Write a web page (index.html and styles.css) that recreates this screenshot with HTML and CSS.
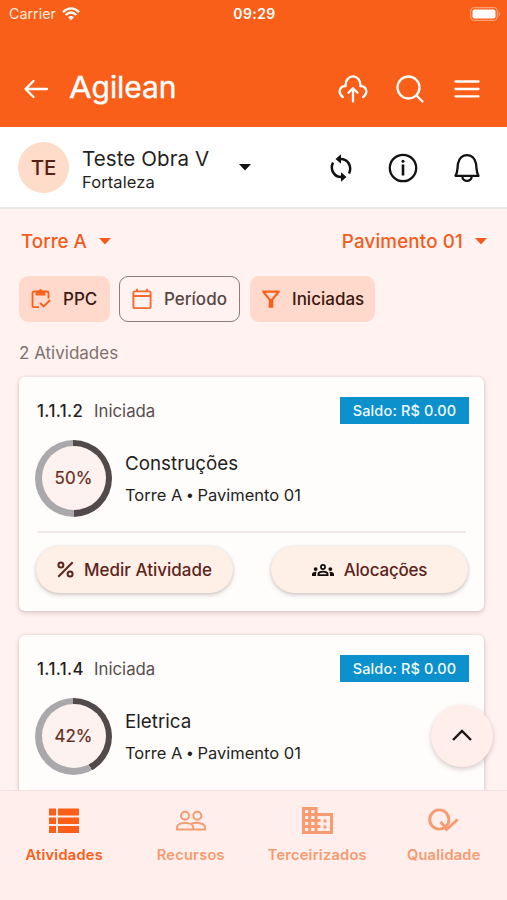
FILE: index.html
```html
<!DOCTYPE html>
<html lang="pt-BR">
<head>
<meta charset="utf-8">
<title>Agilean</title>
<link rel="stylesheet" href="styles.css">
</head>
<body>
<div class="app">
  <header class="top">
    <div class="status">
      <div class="carrier"><span>Carrier</span>
        <svg width="18" height="14" viewBox="0 0 18 14" fill="none" stroke="#fff" stroke-width="2.3"><path d="M.9 5.1Q9-2.4 17.100 5.100M3.700 8Q9 3.100 14.300 8"/><path d="M6 10.200Q9 7.600 12 10.200L9 13.300Z" fill="#fff" stroke="none"/></svg>
      </div>
      <span class="clock">09:29</span>
      <svg class="battery" width="31" height="14" viewBox="0 0 31 14"><rect x=".7" y=".7" width="26.600" height="12.600" rx="3.600" fill="none" stroke="#fff" stroke-opacity=".4" stroke-width="1.200"/><rect x="2.500" y="2.500" width="23" height="9" rx="2" fill="#fff"/><path d="M28.700 4.500q3 2.500 0 5z" fill="#fff" fill-opacity=".4"/></svg>
    </div>
    <div class="bar">
      <svg width="26" height="22" viewBox="0 0 26 22" fill="none" stroke="#fff" stroke-width="2.300" stroke-linecap="round" stroke-linejoin="round"><path d="M24 11H2.500M10.500 3L2.500 11l8 8"/></svg>
      <span class="logo"><span class="logo-a">A</span>gilean</span>
      <div class="actions">
        <svg width="30" height="28" viewBox="0 0 30 28" fill="none" stroke="#fff" stroke-width="2.300" stroke-linecap="round" stroke-linejoin="round"><path d="M4.800 22C-.5 18 1.500 10.800 7.600 11.200C6.500-1.800 23.500-1.800 22.400 11.200C28.500 10.800 30.500 18 25.200 22"/><path d="M15 26.500V13.500M10.500 17.800L15 13.300l4.500 4.500"/></svg>
        <svg width="28" height="28" viewBox="0 0 28 28" fill="none" stroke="#fff" stroke-width="2.300" stroke-linecap="round"><circle cx="12.500" cy="12.500" r="11"/><path d="M20.500 20.500l6 6"/></svg>
        <svg width="26" height="20" viewBox="0 0 26 20" stroke="#fff" stroke-width="2.300" stroke-linecap="round"><path d="M1.500 2.500h23M1.500 10h23M1.500 17.300h23"/></svg>
      </div>
    </div>
  </header>

  <section class="project">
    <div class="avatar">TE</div>
    <div class="project-text"><div class="project-name">Teste Obra V</div><div class="project-city">Fortaleza</div></div>
    <svg class="caret" width="12" height="7" viewBox="0 0 12 7"><path d="M0 0h12L6 6.500z" fill="#111"/></svg>
    <div class="project-icons">
      <svg width="24" height="28" viewBox="0 0 24 28" fill="none" stroke="#111" stroke-width="2.500"><path d="M11 5C18.500 4.500 23.500 12 20 19.500"/><path d="M13 23C5.500 23.500.500 16 4 8.500"/><path d="M6.500 5L12 .2v9.600zM17.500 23L12 18.200v9.600z" fill="#111" stroke="none"/></svg>
      <svg width="30" height="30" viewBox="0 0 30 30" fill="none" stroke="#111" stroke-width="2.300"><circle cx="15" cy="15" r="13.200"/><path d="M15 11.500V22.500" stroke-width="2.600"/><circle cx="15" cy="8.300" r="1.500" fill="#111" stroke="none"/></svg>
      <svg width="28" height="30" viewBox="0 0 28 30" fill="none" stroke="#111" stroke-width="2.300" stroke-linejoin="round"><path d="M2.500 22.800C5 19 4.200 15.500 5 10.500C7.200-.8 20.800-.8 23 10.500C23.800 15.500 23 19 25.500 22.800z"/><path d="M9.300 23c0 6.500 9.400 6.500 9.400 0"/></svg>
    </div>
  </section>

  <main class="content">
    <div class="selectors">
      <div class="selector"><span>Torre A</span><svg width="12" height="7" viewBox="0 0 12 7"><path d="M0 0h12L6 6.500z" fill="#f45b1b"/></svg></div>
      <div class="selector floor"><span>Pavimento 01</span><svg width="12" height="7" viewBox="0 0 12 7"><path d="M0 0h12L6 6.500z" fill="#f45b1b"/></svg></div>
    </div>
    <div class="chips">
      <div class="chip ppc">
        <svg width="20" height="20" viewBox="0 0 20 20" fill="none" stroke="#fa5e1a" stroke-width="1.800"><path d="M8 18.200H3a1.500 1.500 0 0 1-1.500-1.500V4A1.500 1.500 0 0 1 3 2.500h13A1.500 1.500 0 0 1 17.500 4v5.500"/><path d="M5.500 2.500v3.200h8V2.500"/><path d="M6 1.800h2a1.500 1.500 0 0 1 3 0h2v3H6z" fill="#fa5e1a" stroke="none"/><circle cx="9.500" cy="2.500" r="1.900" fill="#fa5e1a" stroke="none"/><path d="M9.200 14l3.500 3.500 6.500-6.500"/></svg>
        <span>PPC</span>
      </div>
      <div class="chip period">
        <svg width="20" height="22" viewBox="0 0 20 22" fill="none" stroke="#fa6a2a" stroke-width="1.900"><rect x="1.400" y="3.400" width="17.200" height="16.700" rx="1.300"/><path d="M1.500 8h17M5 .7v3M15 .7v3"/></svg>
        <span>Período</span>
      </div>
      <div class="chip started">
        <svg width="18" height="18" viewBox="0 0 18 18" fill="#fa5e1a" fill-rule="evenodd"><path d="M.3.500h17.400v1.700L11.300 10v7.700H6.700V10L.3 2.200zM3.500 2.700L8.300 8.700h1.400L14.500 2.700z"/></svg>
        <span>Iniciadas</span>
      </div>
    </div>
    <div class="count">2 Atividades</div>

    <article class="card">
      <div class="card-top"><span class="code">1.1.1.2</span><span class="state">Iniciada</span><span class="tag"><span>Saldo: R$ 0.00</span></span></div>
      <div class="summary">
        <div class="ring" style="--p:50%"><div>50%</div></div>
        <div><div class="title">Construções</div><div class="place">Torre A <span class="dot">•</span> Pavimento 01</div></div>
      </div>
      <div class="buttons">
        <div class="button">
          <svg width="17" height="17" viewBox="0 0 17 17" fill="none" stroke="#5c241b" stroke-width="2"><path d="M1.300 15.700L15.700 1.300"/><circle cx="3.900" cy="3.900" r="2.500"/><circle cx="13.100" cy="13.100" r="2.500"/></svg>
          <span>Medir Atividade</span>
        </div>
        <div class="button">
          <svg width="22" height="12" viewBox="0 0 24 13" fill="#140d0b"><path fill-rule="evenodd" d="M12 7.200c1.600 0 3.100.4 4.200.9 1.100.5 1.800 1.600 1.800 2.800V13H6v-2.100c0-1.200.7-2.300 1.800-2.800 1.100-.5 2.600-.9 4.200-.9zM8 11h8c-.2-.9-2-1.800-4-1.800S8.200 10 8 11zM12 0a3.200 3.200 0 1 1 0 6.400A3.200 3.200 0 0 1 12 0zm0 1.900a1.300 1.300 0 1 0 0 2.600 1.300 1.300 0 0 0 0-2.600z"/><circle cx="4" cy="5.500" r="2.100"/><circle cx="20" cy="5.500" r="2.100"/><path d="M0 13v-1.800c0-1.700 2-3 5.100-2.700-.4.700-.7 1.500-.7 2.400V13zM24 13v-1.800c0-1.700-2-3-5.100-2.700.4.700.7 1.500.7 2.400V13z"/></svg>
          <span class="aloc">Alocações</span>
        </div>
      </div>
    </article>

    <article class="card">
      <div class="card-top"><span class="code">1.1.1.4</span><span class="state">Iniciada</span><span class="tag"><span>Saldo: R$ 0.00</span></span></div>
      <div class="summary">
        <div class="ring" style="--p:42%"><div>42%</div></div>
        <div><div class="title">Eletrica</div><div class="place">Torre A <span class="dot">•</span> Pavimento 01</div></div>
      </div>
    </article>
  </main>

  <div class="fab"><svg width="20" height="12" viewBox="0 0 20 12" fill="none" stroke="#201613" stroke-width="2.400"><path d="M1 11l9-9 9 9"/></svg></div>

  <nav class="nav">
    <div class="tab active">
      <svg width="30" height="30" viewBox="0 0 30 30" fill="currentColor"><path d="M0 2.500h7v7H0zM9 2.500h21v7H9zM0 11.500h7v6.500H0zM9 11.500h21v6.500H9zM0 20h7v7H0zM9 20h21v7H9z"/></svg>
      <span>Atividades</span>
    </div>
    <div class="tab">
      <svg width="30" height="30" viewBox="0 0 30 30" fill="none" stroke="currentColor" stroke-width="2"><circle cx="9" cy="9.700" r="4"/><circle cx="21.300" cy="9.700" r="4"/><path d="M1 23.500v-2.200c0-5.700 16.200-5.700 16.200 0v2.200zM15 18.200c5-2.600 14-1.200 14 3.100v2.200H17"/></svg>
      <span>Recursos</span>
    </div>
    <div class="tab">
      <svg width="31" height="30" viewBox="0 0 31 30" fill="currentColor" fill-rule="evenodd"><path d="M0 1h15.500v6H31v21H0zM3 4v3h3.200V4zM9.200 4v3h3.300V4zM3 10v3h3.200v-3zM9.200 10v3h3.300v-3zM3 16v3h3.200v-3zM9.200 16v3h3.300v-3zM3 22v3h3.200v-3zM9.200 22v3h3.300v-3zM15.500 10v3h3v3h-3v3h3v3h-3v3H28V10z"/><path d="M21.500 13.500h3v3h-3zM21.500 19.500h3v3h-3z"/></svg>
      <span>Terceirizados</span>
    </div>
    <div class="tab">
      <svg width="31" height="30" viewBox="0 0 31 30" fill="none" stroke="currentColor" stroke-width="2.900"><circle cx="11.300" cy="13.500" r="9.600"/><path d="M12.500 16l6 6.500M17.500 24.500L29.600 13.500"/></svg>
      <span>Qualidade</span>
    </div>
  </nav>
</div>
</body>
</html>
```
FILE: styles.css
```css
* { box-sizing: border-box; }
body { margin: 0; font-family: Inter, "Liberation Sans", sans-serif; color: #241f1e; }
svg { display: block; flex: none; }
span { white-space: nowrap; }
.app { position: relative; width: 507px; height: 900px; display: flex; flex-direction: column; overflow: hidden; background: #fff2f1; }

.top { height: 127px; flex: none; background: #fa5f1a; color: #fff; }
.status { height: 28px; display: grid; grid-template-columns: 1fr auto 1fr; align-items: center; padding: 0 7px 1px 9px; }
.carrier { display: flex; align-items: center; gap: 6px; font-size: 14.3px; color: #ffe9dc; }
.clock { font-size: 14px; font-weight: 600; letter-spacing: .4px; }
.battery { justify-self: end; margin-right: -1px; }
.bar { height: 99px; display: flex; align-items: center; padding: 22px 27px 0 23px; }
.logo { margin-left: 20px; font-size: 30px; letter-spacing: -.1px; line-height: 34px; margin-top: -3px; -webkit-text-stroke: .35px #fff; }
.logo-a { display: inline-block; transform-origin: left bottom; transform: scaleX(1.1); margin-right: 2px; }
.actions { margin-left: auto; display: flex; align-items: center; gap: 29px; }
.actions svg:nth-child(2) { margin-left: -1px; margin-right: 1px; }

.project { height: 82px; flex: none; display: flex; align-items: center; padding: 1px 26px 0 18px; background: #fff; border-bottom: 2px solid #ece8e7; }
.avatar { width: 51px; height: 51px; border-radius: 50%; background: #ffdbc9; color: #5a1f13; display: grid; place-items: center; font-size: 20.5px; font-weight: 500; }
.project-text { width: 145px; margin-left: 13px; padding-top: 2px; }
.project-name { font-size: 20.5px; line-height: 25px; letter-spacing: .1px; margin-top: 1px; white-space: nowrap; }
.project-city { font-size: 16.5px; line-height: 22px; letter-spacing: .1px; }
.caret { margin-left: 12px; }
.project-icons { margin-left: auto; display: flex; align-items: center; gap: 35px; }
.project-icons svg:first-child { margin-right: 0; }

.content { flex: 1; min-height: 0; overflow: hidden; padding: 0 23px 0 19px; }
.selectors { height: 67px; display: flex; justify-content: space-between; align-items: center; margin: 0 -3px 0 2px; padding-bottom: 2px; }
.selector { display: flex; align-items: center; gap: 12px; color: #f45b1b; font-size: 18.8px; font-weight: 500; }
.floor { letter-spacing: .15px; }
.chips { display: flex; gap: 10px; height: 46px; }
.chip { display: flex; align-items: center; border-radius: 9px; background: #ffdacc; color: #3a1710; font-size: 17px; font-weight: 500; padding-left: 12px; }
.ppc { width: 91px; gap: 12px; }
.period { width: 121px; gap: 12px; border: 1.500px solid #8c7c7a; background: transparent; color: #574644; margin-left: -1px; }
.started { width: 125px; gap: 12px; }
.count { height: 55px; padding-top: 20px; font-size: 17px; line-height: 22px; color: #7f706e; }

.card { height: 234px; padding: 20px 15px 0 16px; margin-bottom: 24px; border-radius: 6px; background: #fffdfc; box-shadow: 0 2px 5px #5a303033, 0 0 3px #5a303022; }
.card-top { height: 27px; display: flex; align-items: center; padding-left: 2px; font-size: 16.8px; }
.code { font-weight: 500; width: 57px; letter-spacing: .4px; }
.state { color: #574f4e; }
.tag { margin-left: auto; width: 129px; height: 27px; background: #0d91cc; color: #edf9ff; display: grid; place-items: center; font-size: 14.5px; letter-spacing: .15px; font-weight: 500; }
.summary { display: flex; align-items: center; gap: 13px; margin-top: 15px; height: 78px; }
.ring { width: 77px; height: 77px; border-radius: 50%; padding: 6.500px; background: conic-gradient(#51494a 0 var(--p), #aaa8aa var(--p)); flex: none; }
.ring div { height: 100%; border-radius: 50%; background: #fdf2ef; display: grid; place-items: center; color: #6a2c20; font-size: 17px; -webkit-text-stroke: .2px #6a2c20; }
.title { font-size: 18.8px; line-height: 28px; }
.place { font-size: 16.500px; line-height: 22px; margin-top: 6px; white-space: nowrap; }
.dot { font-family: "Liberation Sans", sans-serif; }
.buttons { display: flex; justify-content: space-between; margin: 14px 0 0 2px; padding-top: 13px; border-top: 2px solid #f0e8e7; width: 429px; }
.button { width: 197px; height: 47px; border-radius: 24px; background: #fff0e7; box-shadow: 0 2px 4px #46302840, 0 0 3px #46302815; display: flex; align-items: center; justify-content: center; gap: 10px; color: #5c241b; font-size: 17px; font-weight: 500; }
.button:first-child { margin-left: -1px; }
.button:last-child { margin-right: -2px; }
.aloc { letter-spacing: -.2px; }

.fab { position: absolute; left: 431px; top: 705px; width: 62px; height: 62px; border-radius: 50%; background: #ffeee9; box-shadow: 0 2px 5px #50303040; display: grid; place-items: center; padding-bottom: 3px; }
.nav { height: 110px; flex: none; display: grid; grid-template-columns: repeat(4, 1fr); padding-left: 1px; background: #ffeeec; border-top: 1px solid #f5e1df; position: relative; }
.tab { display: flex; flex-direction: column; align-items: center; padding-top: 15px; color: #f79b70; font-size: 14.6px; font-weight: 600; }
.tab span { margin-top: 9px; line-height: 20px; letter-spacing: .25px; }
.active { color: #fa5f1a; }
```
